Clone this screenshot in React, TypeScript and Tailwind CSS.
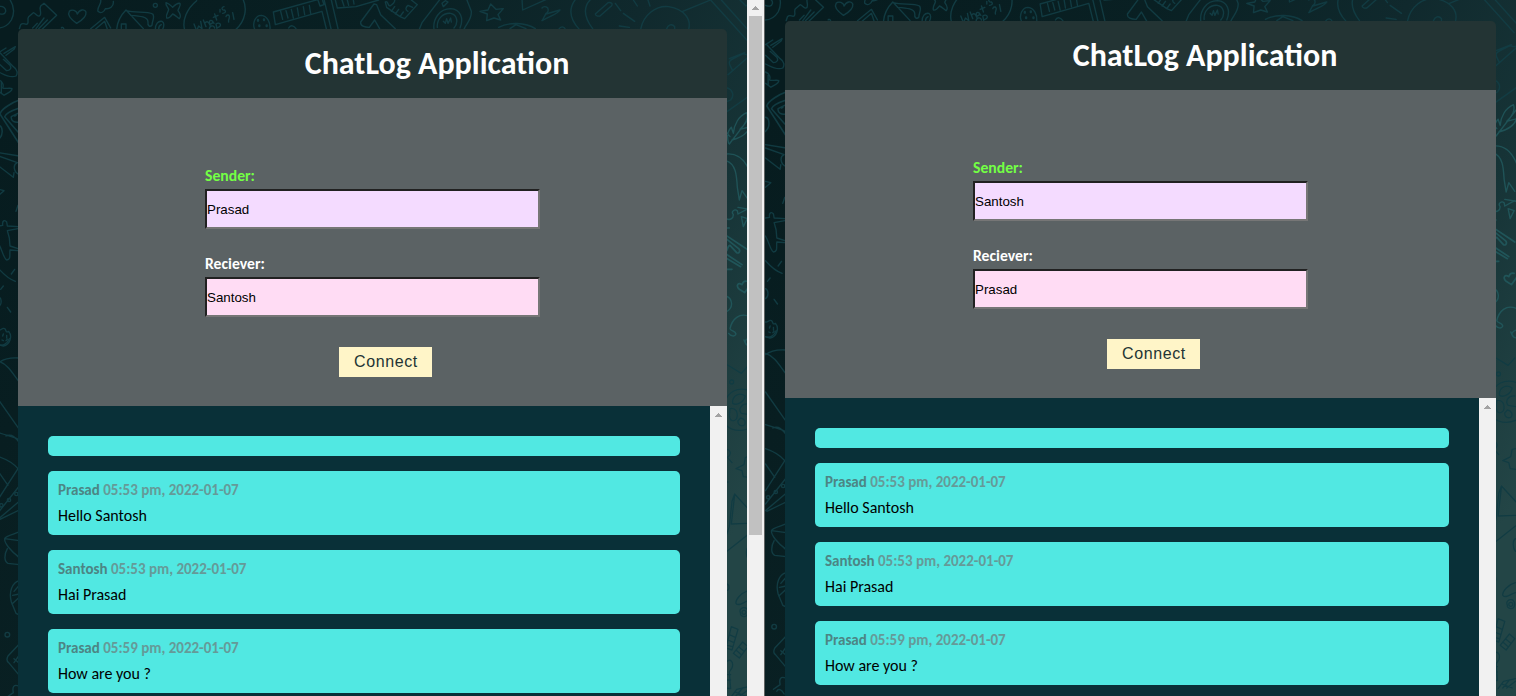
import React from "react";

type Message = { author?: string; time?: string; text?: string };

const MESSAGES: Message[] = [
  {},
  { author: "Prasad", time: "05:53 pm, 2022-01-07", text: "Hello Santosh" },
  { author: "Santosh", time: "05:53 pm, 2022-01-07", text: "Hai Prasad" },
  { author: "Prasad", time: "05:59 pm, 2022-01-07", text: "How are you ?" },
];

// Line-art wallpaper, drawn on a grid three times finer than the page.
function Doodles({ id, dx, dy }: { id: string; dx: number; dy: number }) {
  return (
    <svg className="absolute inset-0 h-full w-full" aria-hidden="true">
      <defs>
        <linearGradient id={`${id}-bg`} gradientUnits="userSpaceOnUse" x1="0" y1="120" x2="750" y2="500">
          <stop offset="0" stopColor="#071c1f" />
          <stop offset="0.35" stopColor="#092023" />
          <stop offset="0.62" stopColor="#10292d" />
          <stop offset="0.8" stopColor="#163336" />
          <stop offset="1" stopColor="#234546" />
        </linearGradient>
        <linearGradient id={`${id}-ink`} gradientUnits="userSpaceOnUse" x1="0" y1="0" x2="2250" y2="600">
          <stop offset="0" stopColor="#103a41" />
          <stop offset="0.7" stopColor="#143f46" />
          <stop offset="1" stopColor="#205559" />
        </linearGradient>
      </defs>
      <rect width="100%" height="100%" fill={`url(#${id}-bg)`} />
      <g
        transform={`translate(${dx} ${dy}) scale(0.33333)`}
        fill="none"
        stroke={`url(#${id}-ink)`}
        strokeWidth="4"
        strokeLinecap="round"
        strokeLinejoin="round"
      >
        {/* top edge */}
        <path d="M28 -4C42 16 44 40 34 60C24 76 8 84 -6 84M-4 20C10 16 18 26 17 34C15 44 4 44 -4 40" />
        <path d="M58 86L62 74C70 66 76 76 82 72C88 66 80 58 86 50L100 38C108 40 110 50 118 48C128 44 116 26 122 18L132 10L170 46L124 90M108 86L132 54M116 86L142 60M98 84L112 70" />
        <path d="M230 70C216 60 200 46 208 34C216 26 230 32 232 42C238 28 254 26 258 36C260 50 244 62 230 70Z" />
        <path d="M302 0C306 12 290 22 294 34C302 42 312 36 316 26C328 28 342 20 340 4" />
        <path d="M184 84C186 80 190 82 192 88M272 86L314 52L332 84M286 88L314 64L322 88M350 88C352 66 364 44 378 30L430 86M364 86V72H378V86M378 32C408 40 440 32 458 42C466 52 456 62 456 76C450 82 442 78 444 66C444 50 420 48 392 46" />
        <path d="M466 88C466 72 474 62 486 64C494 68 492 80 488 88M476 88C476 80 478 76 484 74" />
        <circle cx="466" cy="16" r="6" />
        <path d="M498 8C510 12 514 18 518 22C524 16 530 8 540 10C544 20 534 24 534 32C540 40 544 50 538 56C530 50 524 44 518 42C512 50 508 56 500 54C496 42 506 36 506 28C502 20 496 14 498 8Z" />
        <path d="M554 90C546 62 560 26 590 2M728 -4C742 22 738 62 706 90" />
        <path d="M582 72L590 92L596 78L606 86L602 64M610 60L618 80M614 70C620 62 626 64 630 76M638 64C630 56 624 68 632 72C638 72 638 64 638 64L642 70M644 42L650 60M640 52L654 46M660 36V28M672 20C662 22 666 32 674 30C680 36 674 40 668 40M628 88C628 76 642 74 644 84M652 92L648 72C660 64 668 78 654 82M678 50C680 42 690 44 688 52C688 58 684 60 686 66M698 38L702 58" />
        <g transform="translate(750 0)">
          <path d="M14 88C6 70 16 46 34 46C52 48 62 68 60 88" />
          <path d="M24 60V62M42 58V60M28 76V78M50 76V78" strokeWidth="7" />
          <path d="M70 36L206 -2M76 74L216 34M70 36L76 74M92 34L98 58M108 32L114 54M124 28L130 54M142 24L146 48M160 20L164 44M178 16L182 40M204 0L210 18L222 14L218 2M216 34L230 90M222 -2L244 90M244 0L264 86M256 0L262 24L318 20L386 0M276 0L282 18M292 0L296 16M310 0L312 12" />
          <path d="M116 84C122 72 132 78 138 86M390 88L374 60L358 82C344 82 330 78 332 66L372 12L380 14L392 44L436 86" />
          <path d="M406 6C416 2 410 14 420 18C430 12 436 4 434 -4M406 6L410 22L450 50L464 56L502 14L484 0M424 34L434 20M436 42L446 28M450 50L460 36M474 34C464 30 468 20 474 16L488 22" />
          <path d="M508 88L516 68L570 -2M576 10L586 2L594 6L580 20ZM650 -2L664 34C666 60 648 70 642 88M552 88C548 58 568 26 602 26C632 28 642 56 630 84M562 82C560 58 578 38 602 40C622 44 626 68 612 84M580 64L586 70L590 56L594 70L602 54L604 66" />
          <path d="M690 34L714 30L722 12L738 28L760 26L744 44L752 60L732 54L710 62L712 42Z" />
        </g>
        <g transform="translate(1500 0)">
          <path d="M66 -4L68 30L144 -4M126 24C132 16 148 20 144 34L138 42L180 30C174 42 152 46 126 62C132 52 136 46 138 40" />
          <path d="M-4 82C26 66 76 66 106 86M30 86L48 74L78 86M176 88C182 78 192 78 196 88M228 -4C204 26 210 58 238 88M274 -4C246 22 254 54 278 86" />
          <path d="M286 42L324 8C334 6 340 12 334 18L300 48C292 50 286 46 286 42ZM346 10L362 32M370 40L404 64M358 78L388 82M400 0L412 18M444 0L450 18M422 88C430 44 468 16 506 20C554 28 574 58 566 88M500 86C504 74 516 70 524 80V86M548 34L632 0M632 0L742 122M664 0L750 96M720 0L738 18L750 8" />
          <path d="M688 176L734 158M690 196C684 184 692 180 700 176L728 162C736 160 742 168 748 162M690 196L698 212M684 224L748 168M682 264C698 270 704 286 692 300L682 304M682 334L750 286" />
        </g>
        {/* left edge */}
        <path d="M-4 158L18 144M12 160L46 140L42 148L18 166M0 158L40 200C52 208 54 220 48 228C28 236 10 222 -4 216M10 178L30 196C36 204 30 212 20 212L-4 190M-4 240C8 244 12 256 8 264C16 268 28 262 36 266C36 276 22 278 12 286L-4 274M4 244V280" />
        <path d="M58 300C40 306 4 326 0 342L58 432M58 324C40 330 18 338 14 350L54 396M58 338L34 350C32 364 44 368 58 366M44 348L48 346M-4 376C8 378 12 404 -4 418" strokeWidth="4.5" />
        <path d="M-4 458L58 468M-4 468L52 488M-4 498L40 532L42 518M52 488C38 494 40 516 58 524M-4 568L12 572L-4 586M54 616L48 634" />
        <path d="M-4 678L8 676C6 662 14 658 20 666L22 678L54 680M54 686L22 692L28 714L30 738L54 746M54 752L30 750C28 762 34 780 20 780C10 774 8 752 -4 732M-4 806C12 824 28 838 46 844M44 808L34 822M10 858L2 868M22 922L32 936M-4 890C6 894 6 914 -4 920" />
        <path d="M-4 990C4 992 6 982 14 986C20 990 16 1000 26 994C38 1008 30 1034 10 1038L-4 1034M10 1002L8 1008M20 1006V1014M6 1020L10 1022M18 1022L22 1018" />
        <path d="M-4 1034C10 1040 22 1030 28 1016M-4 1088C14 1074 34 1072 58 1074M-4 1084C24 1092 40 1124 58 1146M-4 1200L58 1288M-4 1298C24 1308 46 1310 58 1320M18 1308C36 1300 48 1314 58 1328M-4 1370C20 1378 42 1392 54 1406L-4 1496M-4 1416L24 1456M-4 1536L58 1458M-4 1556L58 1504M0 1558L58 1530" />
        <circle cx="4" cy="1516" r="5" />
        <circle cx="27" cy="1500" r="5" />
        <circle cx="49" cy="1482" r="5" />
        <path d="M58 1596C36 1604 16 1608 14 1616C12 1628 32 1654 58 1672M14 1616L58 1622M22 1646C12 1664 12 1684 24 1690L58 1694M48 1664L56 1672M58 1742C36 1748 26 1776 34 1806L48 1840L56 1844M56 1758L42 1774M38 1786L58 1782M36 1812L58 1792" />
        <circle cx="22" cy="1904" r="7" />
        <path d="M58 1932L24 1968C20 1976 20 1984 26 1988L58 2026M42 1988L56 1968M42 1976L56 1988M56 2058C42 2052 36 2060 40 2078L20 2092M30 2098C34 2088 44 2092 52 2106" />
        {/* right edge */}
        <path d="M2186 430C2180 410 2184 392 2194 382L2200 400C2202 374 2216 348 2240 338C2246 354 2236 374 2220 388L2250 380C2242 402 2220 414 2196 420M2188 432L2248 354M2180 398L2190 410" />
        <path d="M2178 462C2212 458 2234 476 2250 516M2178 482C2208 492 2210 526 2212 562L2218 600L2226 572L2244 598M2178 656C2190 662 2200 656 2200 644C2192 634 2204 626 2212 632L2214 642L2244 626M2214 622L2250 628M2224 650L2242 656L2230 680ZM2182 684H2188" />
        <path d="M2178 706L2244 750M2178 716L2216 746C2222 752 2218 762 2210 758L2190 736C2182 736 2184 752 2178 754M2178 774L2222 800M2178 762L2226 794M2180 808H2196M2242 844C2228 840 2228 852 2226 854C2212 844 2208 860 2218 868L2234 878L2248 858" strokeWidth="5" />
        <path d="M2178 888C2196 894 2204 922 2178 936M2250 950C2218 936 2196 958 2190 986C2192 994 2206 992 2208 1002C2204 1012 2192 1008 2186 1000M2250 1014C2236 1016 2230 1028 2242 1036M2232 1020C2236 1034 2246 1040 2252 1036" />
        <g transform="translate(1920 1020)">
          <path d="M258 72L304 100L324 78M330 152C290 138 264 158 256 184M256 254C278 274 302 276 330 264M278 182C282 162 302 158 316 168C312 186 290 198 278 190ZM324 192C304 190 294 208 304 220L328 224M270 206C286 202 296 216 290 236C280 248 268 242 268 226ZM302 234C314 236 318 246 314 254C304 262 292 254 294 242Z" />
          <circle cx="275" cy="126" r="6" />
          <path d="M258 328C272 328 276 344 262 352L276 368M258 426H264M328 350L316 352L312 374L288 386L306 392L310 410L328 412M258 590L268 560L276 484L284 462L328 510M284 464L274 552L326 550M326 582L258 636M326 620C316 626 318 650 326 658M258 732C270 732 270 752 258 752" />
          <path d="M326 752C302 758 286 780 288 790C296 802 312 784 326 782M302 820C296 808 306 800 318 804C328 814 324 830 312 830C304 828 300 824 302 820" />
          <circle cx="312" cy="817" r="6" />
          <path d="M258 924L274 860L294 868L276 930ZM268 884L286 892M264 900L282 908M262 916L278 920M280 940L308 906L324 920L298 954ZM288 930L304 944M296 920L312 934M258 966C272 954 282 966 276 984L268 996L272 1046L258 1044M260 1004H272M260 1020H272M274 1070L290 1048L326 1040M288 1068L308 1044M300 1068L326 1048M284 1056L316 1068" />
        </g>
      </g>
    </svg>
  );
}

function UpArrow() {
  return (
    <svg width="7" height="4" viewBox="0 0 7 4" shapeRendering="crispEdges" aria-hidden="true">
      <path d="M3 0h1v1h1v1h1v1h1v1H0V3h1V2h1V1h1z" fill="#a3a3a3" />
    </svg>
  );
}

function Field({ label, value, tone, labelTone }: { label: string; value: string; tone: string; labelTone: string }) {
  return (
    <label className="flex h-[88px] flex-col">
      <span className={`h-[26px] text-[15.7px] leading-[25px] font-bold ${labelTone}`}>{label}</span>
      <input
        className={`h-10 w-[335px] rounded-none border-2 border-t-[#212121] border-r-[#767676] border-b-[#767676] border-l-[#212121] p-0 font-['Liberation_Sans',sans-serif] text-[13.33px] text-black outline-none ${tone}`}
        defaultValue={value}
      />
    </label>
  );
}

function ChatWindow({ sender, receiver, card, form, button }: { sender: string; receiver: string; card: string; form: string; button: string }) {
  return (
    <section className={`relative flex flex-col ${card}`}>
      <header className="h-[69px] shrink-0 rounded-t-[5px] bg-[#233434] pl-[129px] text-center text-[32px] leading-[69px] font-bold text-white">
        <h1>ChatLog Application</h1>
      </header>
      <form className={`flex h-[308px] shrink-0 flex-col bg-[#5b6264] pt-[65px] ${form}`} onSubmit={(e) => e.preventDefault()}>
        <Field label="Sender:" value={sender} tone="bg-[#f4dbff]" labelTone="text-[#73ff44]" />
        <Field label="Reciever:" value={receiver} tone="bg-[#ffdcf4]" labelTone="text-white" />
        <button className={`mt-2 h-[30px] w-[93px] bg-[#fff5c8] pl-px font-['Liberation_Sans',sans-serif] text-[16px] leading-[30px] tracking-[0.6px] text-[#233434] ${button}`}>
          Connect
        </button>
      </form>
      <div className="flex min-h-0 flex-1 overflow-hidden">
        <div className="flex flex-1 flex-col gap-[15px] bg-[#093038] p-[30px]">
          {MESSAGES.map((m, i) => (
            <article key={i} className={`shrink-0 rounded-[5px] bg-[#51e8e2] px-[10px] ${m.text ? "h-16" : "h-5"}`}>
              {m.text && (
                <>
                  <p className="pt-[7px] text-[15px] leading-[24px] font-bold text-[#659a98]">
                    <span className="text-[#4c8584]">{m.author}</span> {m.time}
                  </p>
                  <p className="text-base leading-[28px] text-black">{m.text}</p>
                </>
              )}
            </article>
          ))}
        </div>
        <div className="flex w-[17px] shrink-0 justify-center bg-[#f1f1f1] pt-[7px]">
          <UpArrow />
        </div>
      </div>
    </section>
  );
}

export default function App() {
  return (
    <main className="flex h-[696px] w-[1516px] overflow-hidden font-[Carlito,Lato,sans-serif]">
      <div className="relative flex w-[747px] shrink-0 pt-[29px] pl-[18px]">
        <Doodles id="left" dx={0} dy={0} />
        <ChatWindow sender="Prasad" receiver="Santosh" card="w-[709px]" form="pl-[187px]" button="ml-[134px]" />
      </div>
      <div className="flex w-[17px] shrink-0 flex-col items-center bg-[#f1f1f1]">
        <div className="flex h-4 items-center">
          <UpArrow />
        </div>
        <div className="h-[519px] w-[13px] bg-[#c1c1c1]" />
      </div>
      <div className="w-px shrink-0 bg-[#606363]" />
      <div className="relative flex w-[751px] shrink-0 pt-[21px] pl-[20px]">
        <Doodles id="right" dx={1.8} dy={-8} />
        <ChatWindow sender="Santosh" receiver="Prasad" card="w-[711px]" form="pl-[188px]" button="ml-[134px]" />
      </div>
    </main>
  );
}
